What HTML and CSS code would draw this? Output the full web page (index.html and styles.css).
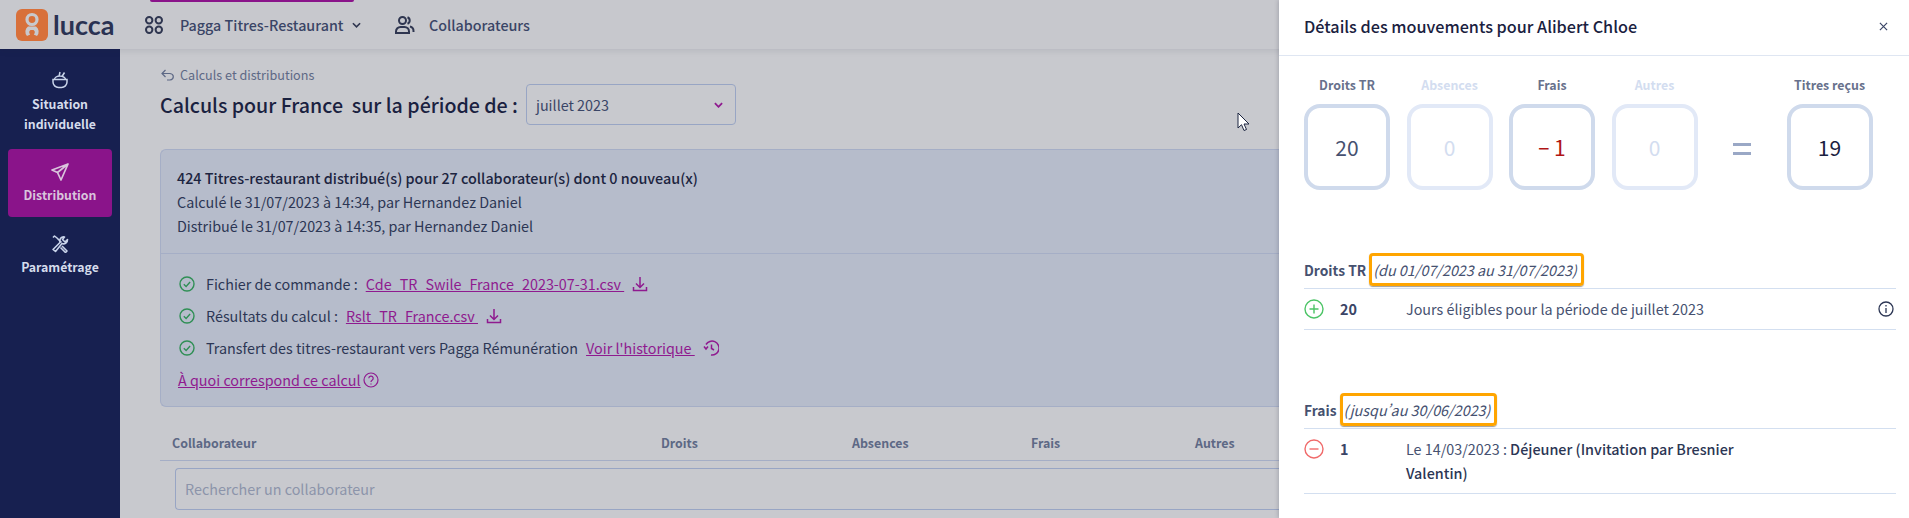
FILE: index.html
```html
<html lang="fr">
<head>
<meta charset="utf-8">
<link rel="stylesheet" href="styles.css">
</head>
<body>

<!-- top bar -->
<div class="topbar">
    <svg class="logo" viewBox="0 0 32 32">
        <rect width="32" height="32" rx="6" fill="#d8703a"/>
        <circle cx="16" cy="10.5" r="5" fill="none" stroke="#c8c9ce" stroke-width="3.2"/>
        <path d="M11 27a6.4 6.4 0 0 1 1-9.5h8a6.4 6.4 0 0 1 1 9.5l-3.2-1.6a3 3 0 0 0 -.3-4.4h-3a3 3 0 0 0 -.3 4.4z" fill="#c8c9ce"/>
    </svg>
    <span class="brand">lucca</span>
    <div class="nav_app">
        <div class="nav_mark"></div>
        <svg class="ico_apps" viewBox="0 0 18 18" fill="none" stroke="#2f3650" stroke-width="2">
            <circle cx="4.200" cy="4.200" r="3.200"/><circle cx="13.800" cy="4.200" r="3.200"/>
            <circle cx="4.200" cy="13.800" r="3.200"/><circle cx="13.800" cy="13.800" r="3.200"/>
        </svg>
        <span class="nav_txt">Pagga Titres-Restaurant</span>
        <svg class="ico_chev" viewBox="0 0 10 6" fill="none" stroke="#2f3650" stroke-width="1.8"><path d="M1 1l4 4 4-4"/></svg>
    </div>
    <div class="nav_users">
        <svg class="ico_users" viewBox="0 0 20 20" fill="none" stroke="#2f3650" stroke-width="2">
            <circle cx="8" cy="5.5" r="3.5"/>
            <path d="M1.500 18v-1.500a4.500 4.500 0 0 1 4.500-4.500h4a4.500 4.500 0 0 1 4.500 4.500v1.500z"/>
            <path d="M13 2.300a3.500 3.500 0 0 1 0 6.500M15.500 11.500a4.500 4.500 0 0 1 3.500 4.500v1"/>
        </svg>
        <span class="nav_txt">Collaborateurs</span>
    </div>
</div>

<div class="layout">
    <!-- left menu -->
    <div class="side">
        <div class="side_item">
            <svg class="side_ico" viewBox="0 0 18 18" fill="none" stroke="#c9d4ea" stroke-width="1.500">
                <path d="M2 8.500h14v2.500a5.500 5.500 0 0 1-5.500 5.500h-3a5.500 5.500 0 0 1-5.500-5.500z"/>
                <path d="M3.500 8.500a5.500 3.500 0 0 1 11 0M8 5.500l1-4.500M11 5.500l2.500-4"/>
            </svg>
            <div>Situation individuelle</div>
        </div>
        <div class="side_item active">
            <svg class="side_ico" viewBox="0 0 18 18" fill="none" stroke="#d9c4dc" stroke-width="1.700" stroke-linejoin="round">
                <path d="M17 1L1 7l5.500 2.500L10 17zM6.500 9.500L17 1"/>
            </svg>
            <div>Distribution</div>
        </div>
        <div class="side_item">
            <svg class="side_ico" viewBox="0 0 18 18" fill="none" stroke="#c9d4ea" stroke-width="1.600" stroke-linejoin="round">
                <path d="M16.500 4.500a4 4 0 0 1-5.500 4L4.500 16.500 2 14.500l7-7a4 4 0 0 1 4.500-5.500l-2 2.500 2.500 2.500z"/>
                <path d="M2 2.500l1.500-1.500 2.500 2 4.500 4.500M11 11l5 5-1.500 1.500-5-5"/>
            </svg>
            <div>Paramétrage</div>
        </div>
    </div>

    <!-- page content -->
    <div class="main">
        <div class="crumb">
            <svg class="ico_back" viewBox="0 0 14 12" fill="none" stroke="#5d6885" stroke-width="1.200">
                <path d="M4.500 1L1 4.500 4.500 8M1 4.500h8a4 3.300 0 0 1 0 6.500H6"/>
            </svg>
            <span>Calculs et distributions</span>
        </div>
        <div class="title_row">
            <span class="title">Calculs pour France &nbsp;sur la période de :</span>
            <div class="select">
                <span>juillet 2023</span>
                <svg class="ico_sel" viewBox="0 0 10 6" fill="none" stroke="#8f1a8f" stroke-width="2"><path d="M1 1l4 4 4-4"/></svg>
            </div>
        </div>

        <div class="info">
            <div class="info_top">
                <div class="strong">424 Titres-restaurant distribué(s) pour 27 collaborateur(s) dont 0 nouveau(x)</div>
                <div>Calculé le 31/07/2023 à 14:34, par Hernandez Daniel</div>
                <div>Distribué le 31/07/2023 à 14:35, par Hernandez Daniel</div>
            </div>
            <div class="info_bot">
                <div class="step">
                    <svg class="ico_ok" viewBox="0 0 16 16" fill="none" stroke="#2f8f55" stroke-width="1.400"><circle cx="8" cy="8" r="7"/><path d="M4.800 8.200l2.300 2.200 4-4.400"/></svg>
                    <span>Fichier de commande :</span>
                    <a class="lnk">Cde_TR_Swile_France_2023-07-31.csv&nbsp;</a>
                    <svg class="ico_dl" viewBox="0 0 16 16" fill="none" stroke="#8f1a8f" stroke-width="1.500"><path d="M8 1v10M4 7.500l4 4 4-4M1.500 11v3.500h13V11"/></svg>
                </div>
                <div class="step">
                    <svg class="ico_ok" viewBox="0 0 16 16" fill="none" stroke="#2f8f55" stroke-width="1.400"><circle cx="8" cy="8" r="7"/><path d="M4.800 8.200l2.300 2.200 4-4.400"/></svg>
                    <span>Résultats du calcul :</span>
                    <a class="lnk">Rslt_TR_France.csv&nbsp;</a>
                    <svg class="ico_dl" viewBox="0 0 16 16" fill="none" stroke="#8f1a8f" stroke-width="1.500"><path d="M8 1v10M4 7.500l4 4 4-4M1.500 11v3.500h13V11"/></svg>
                </div>
                <div class="step">
                    <svg class="ico_ok" viewBox="0 0 16 16" fill="none" stroke="#2f8f55" stroke-width="1.400"><circle cx="8" cy="8" r="7"/><path d="M4.800 8.200l2.300 2.200 4-4.400"/></svg>
                    <span>Transfert des titres-restaurant vers Pagga Rémunération</span>
                    <a class="lnk">Voir l'historique&nbsp;</a>
                    <svg class="ico_dl" viewBox="0 0 16 16" fill="none" stroke="#8f1a8f" stroke-width="1.500"><path d="M3 4.500A7 7 0 1 1 8 15M1 6.500l2 2.500 2-2.500M8.500 4.500v4l2.500 1.500"/></svg>
                </div>
                <div class="step help">
                    <a class="lnk">À quoi correspond ce calcul</a>
                    <svg class="ico_help" viewBox="0 0 16 16" fill="none" stroke="#8f1a8f" stroke-width="1.200"><circle cx="8" cy="8" r="7"/><path d="M5.800 6.300a2.200 2.200 0 1 1 3.300 1.900c-.8.500-1.100.9-1.100 1.800M8 11.500v1"/></svg>
                </div>
            </div>
        </div>

        <div class="thead">
            <span class="th c_name">Collaborateur</span>
            <span class="th c_droits">Droits</span>
            <span class="th c_abs">Absences</span>
            <span class="th c_frais">Frais</span>
            <span class="th c_autres">Autres</span>
        </div>
        <div class="search_row">
            <div class="search">Rechercher un collaborateur</div>
        </div>
    </div>
</div>

<!-- mouse pointer -->
<svg class="cursor" viewBox="0 0 13 20"><path d="M1 1v15l3.500-3.300L7 18.500l2.500-1-2.500-5.500h5z" fill="#fff" stroke="#1c2440" stroke-width="1"/></svg>

<!-- right drawer -->
<div class="drawer">
    <div class="dr_head">
        <span class="dr_title">Détails des mouvements pour Alibert Chloe</span>
        <svg class="ico_close" viewBox="0 0 10 10" fill="none" stroke="#3a4566" stroke-width="1.300"><path d="M1 1l8 8M9 1l-8 8"/></svg>
    </div>

    <div class="calc">
        <div class="cell"><div class="cell_lbl">Droits TR</div><div class="box num_mid">20</div></div>
        <div class="cell off"><div class="cell_lbl">Absences</div><div class="box">0</div></div>
        <div class="cell"><div class="cell_lbl">Frais</div><div class="box num_red"><span class="minus">−</span> 1</div></div>
        <div class="cell off"><div class="cell_lbl">Autres</div><div class="box">0</div></div>
        <div class="equal"></div>
        <div class="cell"><div class="cell_lbl">Titres reçus</div><div class="box num_dark">19</div></div>
    </div>

    <div class="sec sec_droits">
        <span class="sec_name">Droits TR</span>
        <span class="sec_note">(du 01/07/2023 au 31/07/2023)</span>
    </div>
    <div class="mv">
        <svg class="ico_sign" viewBox="0 0 20 20" fill="none" stroke="#4cc466" stroke-width="1.400"><circle cx="10" cy="10" r="9"/><path d="M10 5.500v9M5.500 10h9"/></svg>
        <span class="mv_num">20</span>
        <span class="mv_txt">Jours éligibles pour la période de juillet 2023</span>
        <svg class="ico_info" viewBox="0 0 16 16" fill="none" stroke="#2c3654" stroke-width="1.300"><circle cx="8" cy="8" r="7"/><path d="M8 7v5M8 4v1.500"/></svg>
    </div>

    <div class="sec sec_frais">
        <span class="sec_name">Frais</span>
        <span class="sec_note">(jusqu’au 30/06/2023)</span>
    </div>
    <div class="mv">
        <svg class="ico_sign" viewBox="0 0 20 20" fill="none" stroke="#f06a6a" stroke-width="1.400"><circle cx="10" cy="10" r="9"/><path d="M5.500 10h9"/></svg>
        <span class="mv_num">1</span>
        <span class="mv_txt">Le 14/03/2023 : <b>Déjeuner (Invitation par Bresnier Valentin)</b></span>
    </div>
</div>

</body>
</html>
```

FILE: styles.css
```css
html, body {
    margin: 0;
    padding: 0;
    height: 518px;
    overflow: hidden;
    background-color: #c8c9ce;
    font-family: "Noto Sans CJK SC", "Noto Sans", sans-serif;
    font-size: 14.35px;
    line-height: 24px;
    color: #2c3654;
}
svg {
    display: block;
    flex: none;
}

/* top bar */
.topbar {
    height: 49px;
    display: flex;
    align-items: center;
    background-color: #c7c8cd;
    box-shadow: 0 2px 6px rgba(30, 35, 60, 0.1);
    position: relative;
}
.logo {
    width: 32px;
    height: 32px;
    margin-left: 16px;
}
.brand {
    font-family: "Lato", sans-serif;
    font-size: 27px;
    font-weight: 700;
    line-height: 32px;
    color: #2a3252;
    margin-left: 5px;
    width: 92px;
}
.nav_app {
    height: 49px;
    display: flex;
    align-items: center;
    position: relative;
    width: 249px;
}
.nav_mark {
    position: absolute;
    top: 0;
    left: 5px;
    width: 204px;
    height: 2px;
    background-color: #8a148a;
    border-radius: 0 0 2px 2px;
}
.ico_apps {
    width: 18px;
    height: 18px;
}
.nav_txt {
    font-size: 14.3px;
    font-weight: 500;
    color: #3a4566;
    margin-left: 17px;
}
.ico_chev {
    width: 9px;
    height: 6px;
    margin-left: 9px;
}
.nav_users {
    display: flex;
    align-items: center;
}
.ico_users {
    width: 21px;
    height: 20px;
}
.nav_users .nav_txt {
    margin-left: 14px;
}

/* left menu */
.layout {
    display: flex;
    height: 469px;
}
.side {
    width: 104px;
    padding: 0 8px;
    flex: none;
    background-color: #172050;
    color: #d5dcec;
    font-size: 12.3px;
    font-weight: 600;
    line-height: 20px;
    text-align: center;
}
.side_item {
    padding: 14px 0 6px;
    border-radius: 4px;
}
.side_item.active {
    background-color: #8a148a;
    height: 48px;
    margin-bottom: 4px;
    color: #d9c4dc;
}
.side_ico {
    width: 18px;
    height: 18px;
    margin: 0 auto 4px;
}
.side_item:first-child {
    padding: 22px 8px 0;
    height: 78px;
}
.side_item:first-child .side_ico {
    margin-bottom: 5px;
}

/* content */
.main {
    flex: 1;
    padding: 15px 0 0 40px;
    min-width: 0;
}
.crumb {
    display: flex;
    align-items: center;
    gap: 5px;
    font-size: 12.6px;
    line-height: 22px;
    color: #5d6885;
    margin-left: 1px;
}
.ico_back {
    width: 14px;
    height: 12px;
}
.title_row {
    display: flex;
    align-items: center;
    margin-top: -2px;
}
.title {
    font-size: 19.6px;
    font-weight: 500;
    line-height: 41px;
    color: #1a2140;
}
.select {
    width: 210px;
    height: 41px;
    margin-left: 8px;
    border: 1px solid #98a5c4;
    border-radius: 4px;
    display: flex;
    align-items: center;
    justify-content: space-between;
    padding: 0 12px 0 9px;
    box-sizing: border-box;
    color: #3a4566;
}
.ico_sel {
    width: 9px;
    height: 6px;
}
.info {
    margin-top: 24px;
    height: 258px;
    box-sizing: border-box;
    background-color: #b6bccb;
    border: 1px solid #a5aec6;
    border-radius: 6px 0 0 6px;
    border-right: 0;
}
.info_top {
    height: 104px;
    box-sizing: border-box;
    padding: 16px 16px 0;
    border-bottom: 1px solid #a5aec6;
}
.strong {
    font-weight: 500;
    color: #1c2440;
}
.info_bot {
    padding: 14px 16px 0 18px;
}
.step {
    display: flex;
    align-items: center;
    height: 32px;
    color: #2c3654;
}
.ico_ok {
    width: 16px;
    height: 16px;
    margin-right: 11px;
}
.lnk {
    color: #8f1a8f;
    text-decoration: underline;
    margin-left: 8px;
}
.ico_dl {
    width: 16px;
    height: 16px;
    margin-left: 8px;
}
.help {
    margin-left: -1px;
}
.help .lnk {
    margin-left: 0;
}
.ico_help {
    width: 16px;
    height: 16px;
    margin-left: 2px;
}
.thead {
    height: 54px;
    box-sizing: border-box;
    padding-top: 24px;
    border-bottom: 1px solid #a5aec6;
    display: flex;
}
.th {
    font-size: 12.4px;
    font-weight: 600;
    line-height: 24px;
    color: #5d6885;
}
.c_name { margin-left: 12px; width: 489px; }
.c_droits { width: 191px; }
.c_abs { width: 179px; }
.c_frais { width: 164px; }
.search_row {
    padding: 7px 0 0 15px;
}
.search {
    height: 42px;
    box-sizing: border-box;
    border: 1px solid #98a5c4;
    border-radius: 4px;
    border-right: 0;
    padding: 8px 9px;
    color: #8c94aa;
}

/* pointer */
.cursor {
    position: absolute;
    left: 1237px;
    top: 112px;
    width: 13px;
    height: 20px;
}

/* right drawer */
.drawer {
    position: absolute;
    top: 0;
    right: 0;
    width: 630px;
    height: 518px;
    background-color: #fff;
    box-sizing: border-box;
    box-shadow: -1px 0 4px rgba(30, 35, 60, 0.2);
}
.dr_head {
    height: 56px;
    box-sizing: border-box;
    border-bottom: 1px solid #dfe6f2;
    display: flex;
    align-items: center;
    justify-content: space-between;
    padding: 0 21px 3px 25px;
}
.dr_title {
    font-size: 16.2px;
    font-weight: 500;
    color: #1a2140;
}
.ico_close {
    width: 9px;
    height: 9px;
}
.calc {
    display: flex;
    padding: 17px 0 0 25px;
    height: 117px;
}
.cell {
    width: 86px;
    margin-right: 16.500px;
    text-align: center;
}
.cell_lbl {
    font-size: 12.4px;
    font-weight: 600;
    line-height: 24px;
    color: #68718c;
    margin-bottom: 7px;
}
.box {
    width: 86px;
    height: 86px;
    box-sizing: border-box;
    border: 4px solid #cfdaec;
    border-radius: 16px;
    font-size: 21px;
    line-height: 78px;
}
.off .cell_lbl {
    color: #d3ddf0;
}
.off .box {
    border-color: #e2e9f7;
    color: #d3ddf0;
}
.num_mid { color: #465170; }
.num_red { color: #b01515; }
.num_dark { color: #1a2140; }
.minus {
    font-size: 20px;
}
.equal {
    width: 18px;
    height: 6px;
    margin: 70px 35.500px 0 19px;
    border-top: 3px solid #9aa8c6;
    border-bottom: 3px solid #9aa8c6;
}
.sec {
    margin: 0 13px 0 25px;
    border-bottom: 1px solid #d3dff0;
    height: 35px;
    padding-bottom: 3px;
    box-sizing: border-box;
    display: flex;
    align-items: center;
}
.sec_droits { margin-top: 64px; }
.sec_frais { margin-top: 64px; }
.sec_name {
    font-size: 13.8px;
    font-weight: 600;
    color: #465170;
    line-height: 24px;
}
.sec_note {
    font-style: italic;
    font-feature-settings: "pwid";
    color: #465170;
    line-height: 27px;
    box-sizing: border-box;
    border: 3px solid #ffa500;
    border-radius: 4px;
    box-shadow: 0 1px 1px rgba(60, 60, 60, 0.5);
    margin-left: 3px;
    padding: 0 4px 0 1px;
    height: 33px;
}
.mv {
    margin: 0 13px 0 25px;
    padding: 8px 0;
    border-bottom: 1px solid #d3dff0;
    display: flex;
    align-items: flex-start;
}
.ico_sign {
    width: 20px;
    height: 20px;
    margin-top: 2px;
}
.mv_num {
    width: 66px;
    margin-left: 16px;
    font-weight: 600;
    color: #3a4566;
}
.mv_txt {
    width: 345px;
    color: #465170;
}
.mv_txt b {
    font-weight: 500;
    color: #2c3654;
}
.ico_info {
    width: 16px;
    height: 16px;
    margin: 4px 2px 0 auto;
}
```
